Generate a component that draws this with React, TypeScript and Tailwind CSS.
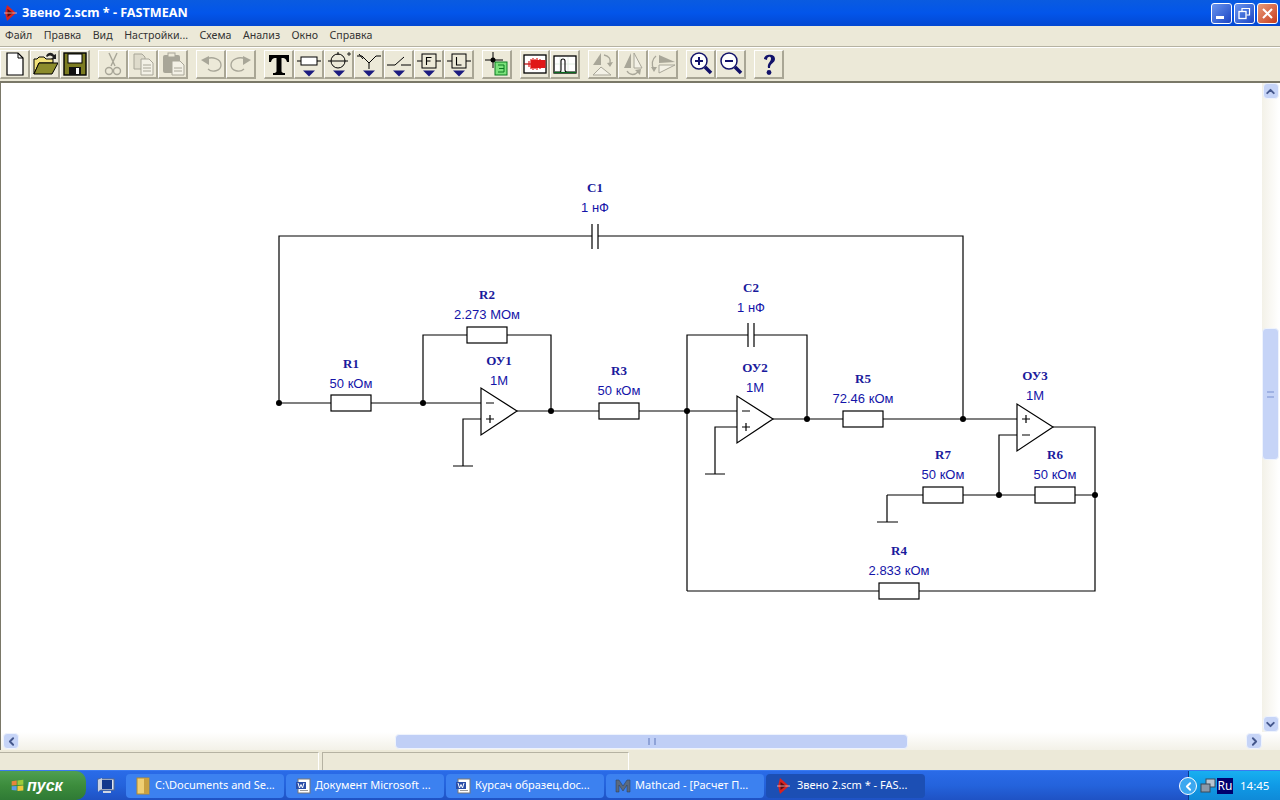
import React from 'react';
import { ChevronLeft, ChevronRight, ChevronUp, ChevronDown } from 'lucide-react';

const ui = { fontFamily: '"Noto Sans", sans-serif' };

// toolbar button with raised XP edge
const Btn = ({ children, arrow }: { children: React.ReactNode; arrow?: boolean }) => (
  <div className="relative w-[30px] h-[29px] flex items-center justify-center border-t border-l border-t-white border-l-white border-b-2 border-r-2 border-b-[#a9a695] border-r-[#a9a695] bg-[#ece9d8]">
    <svg width="26" height="26" viewBox="0 0 26 26" fill="none">
      {children}
      {arrow && <polygon points="7,19.5 19,19.5 13,25.5" fill="#1c1c80" />}
    </svg>
  </div>
);

const Group = ({ children }: { children: React.ReactNode }) => <div className="flex">{children}</div>;

const gray = '#a8a698';

const Toolbar = () => (
  <div className="h-[33px] shrink-0 flex items-center gap-2 bg-[#ece9d8]">
    <Group>
      <Btn>
        <path d="M5 2H16L21 7V24H5Z" fill="#fff" stroke="#000" strokeWidth="1.2" />
        <path d="M16 2V7H21" stroke="#000" strokeWidth="1" />
      </Btn>
      <Btn>
        <path d="M2 23V8H5L7 6H12L14 8H21V12H7L2 23Z" fill="#f2e27a" stroke="#000" />
        <path d="M2 23L7 12H26L20 23Z" fill="#8c8c2c" stroke="#000" />
        <path d="M14 5C16 1 20 1 22 4L24 3V8H19L21 6C19 4 17 4 15 6" fill="#222" />
      </Btn>
      <Btn>
        <rect x="2" y="2" width="22" height="22" fill="#7c7c22" stroke="#000" strokeWidth="1.4" />
        <rect x="6" y="3" width="14" height="9" fill="#fff" stroke="#000" />
        <rect x="7" y="16" width="12" height="8" fill="#111" />
        <rect x="14" y="17" width="3" height="6" fill="#fff" />
      </Btn>
    </Group>
    <Group>
      <Btn>
        <path d="M9 2L15 15M17 2L11 15" stroke={gray} strokeWidth="1.4" />
        <circle cx="9" cy="20" r="3.5" stroke={gray} strokeWidth="1.4" />
        <circle cx="17" cy="20" r="3.5" stroke={gray} strokeWidth="1.4" />
      </Btn>
      <Btn>
        <path d="M4 3H12L15 6V18H4Z" fill="#dedbcb" stroke={gray} />
        <path d="M11 8H19L23 12V24H11Z" fill="#f3f1e6" stroke={gray} />
        <path d="M13 14H21M13 17H21M13 20H21" stroke={gray} />
      </Btn>
      <Btn>
        <rect x="3" y="4" width="17" height="18" rx="2" fill={gray} />
        <rect x="8" y="2" width="7" height="4" fill="#ece9d8" stroke={gray} />
        <path d="M12 10H20L24 14V24H12Z" fill="#f3f1e6" stroke={gray} />
        <path d="M14 17H22M14 20H22" stroke={gray} />
      </Btn>
    </Group>
    <Group>
      <Btn>
        <path d="M9 8C14 5 23 8 23 14C23 20 14 22 10 18" stroke={gray} strokeWidth="1.3" />
        <polygon points="3,9 11,5 11,14" fill={gray} />
      </Btn>
      <Btn>
        <path d="M17 8C12 5 3 8 3 14C3 20 12 22 16 18" stroke={gray} strokeWidth="1.3" />
        <polygon points="23,9 15,5 15,14" fill={gray} />
      </Btn>
    </Group>
    <Group>
      <Btn>
        <path d="M3 4H23V11H21C20 7 18 7 15.5 7V20C15.5 21.5 16.5 22 19 22V24H7V22C9.5 22 10.5 21.5 10.5 20V7C8 7 6 7 5 11H3Z" fill="#000" />
      </Btn>
      <Btn arrow>
        <rect x="5" y="6" width="16" height="8" fill="#fff" stroke="#000" />
        <path d="M1 10H5M21 10H25" stroke="#000" />
      </Btn>
      <Btn arrow>
        <circle cx="12" cy="10" r="7" stroke="#000" />
        <path d="M2 10H22M12 1V4" stroke="#000" />
        <path d="M21 3H25M23 1V5" stroke="#000" strokeWidth="0.8" />
      </Btn>
      <Btn arrow>
        <path d="M1 5H6L13 12L20 5H25M13 12V18" stroke="#000" />
        <path d="M3 3L7 8" stroke="#000" />
      </Btn>
      <Btn arrow>
        <path d="M1 14H9L18 6M15 14H25" stroke="#000" />
      </Btn>
      <Btn arrow>
        <rect x="6" y="3" width="14" height="14" stroke="#000" fill="#ece9d8" />
        <path d="M1 10H6M20 10H25" stroke="#000" />
        <path d="M10.5 14V6.5H15.5M10.5 10H14.5" stroke="#000" strokeWidth="1.1" />
      </Btn>
      <Btn arrow>
        <rect x="6" y="3" width="14" height="14" stroke="#000" fill="#ece9d8" />
        <path d="M1 10H6M20 10H25" stroke="#000" />
        <path d="M10.5 6V14H15.5" stroke="#000" strokeWidth="1.1" />
      </Btn>
    </Group>
    <Group>
      <Btn>
        <path d="M1 9H19M9 1V17" stroke="#000" />
        <circle cx="9" cy="9" r="2.5" fill="#000" />
        <rect x="11" y="11" width="12" height="13" fill="#7be27b" stroke="#0a7a20" />
        <path d="M14 14H20V21H14M15 17.5H20" stroke="#0a7a20" />
      </Btn>
    </Group>
    <Group>
      <Btn>
        <rect x="2" y="4" width="22" height="18" fill="#fff" stroke="#000" strokeWidth="1.3" />
        <rect x="9" y="9" width="14.5" height="8" fill="#e01818" />
        <path d="M2 13H9" stroke="#a00" strokeWidth="1.2" />
        <path d="M9 8V18M11 7V19M13 8V18M15 7V19M18 8V18M7 10V16" stroke="#e01818" strokeWidth="1.2" />
      </Btn>
      <Btn>
        <rect x="2" y="5" width="22" height="17" fill="#fff" stroke="#000" strokeWidth="1.3" />
        <path d="M8 6V21M16 6V21M3 13H23" stroke="#e2efe2" />
        <path d="M3 21H8C9 21 9 20 9 19V10C9 8 10 8 11 8C12 8 13 8 13 10V19C13 20 13 21 15 21H23" stroke="#000" strokeWidth="1.1" />
        <path d="M2 21.5H24" stroke="#0a6a20" strokeWidth="1.2" />
      </Btn>
    </Group>
    <Group>
      <Btn>
        <polygon points="11,2 11,14 3,14" fill={gray} />
        <polygon points="3,24 21,24 11,16" fill="#f3f1e6" stroke={gray} />
        <path d="M14 4C19 5 21 8 20 12" stroke={gray} strokeWidth="1.3" />
        <polygon points="17,12 23,11 20,16" fill={gray} />
      </Btn>
      <Btn>
        <polygon points="11,2 11,17 4,17" fill={gray} />
        <polygon points="14,2 14,17 22,17" fill="#f3f1e6" stroke={gray} />
        <path d="M7 20C10 25 15 24 18 21" stroke={gray} strokeWidth="1.3" />
        <polygon points="15,19 21,18 20,24" fill={gray} />
      </Btn>
      <Btn>
        <polygon points="9,4 25,11 9,12" fill={gray} />
        <polygon points="9,14 25,14 9,22" fill="#f3f1e6" stroke={gray} />
        <path d="M6 5C2 8 1 14 4 18" stroke={gray} strokeWidth="1.3" />
        <polygon points="1,16 7,16 4,21" fill={gray} />
      </Btn>
    </Group>
    <Group>
      <Btn>
        <circle cx="11" cy="10" r="8" fill="#fff" stroke="#12126a" strokeWidth="1.5" />
        <path d="M7 10H15M11 6V14" stroke="#12126a" strokeWidth="2" />
        <path d="M17 16L23 22" stroke="#12126a" strokeWidth="3.5" />
      </Btn>
      <Btn>
        <circle cx="11" cy="10" r="8" fill="#fff" stroke="#12126a" strokeWidth="1.5" />
        <path d="M7 10H15" stroke="#12126a" strokeWidth="2" />
        <path d="M17 16L23 22" stroke="#12126a" strokeWidth="3.5" />
      </Btn>
    </Group>
    <Group>
      <Btn>
        <path d="M8 8C8 3 19 2 19 8C19 12 14 12 14 17H12C11 12 15 11 15 7.5C15 5 11 5 11 9Z" fill="#12126a" />
        <circle cx="13" cy="21.5" r="2.4" fill="#12126a" />
      </Btn>
    </Group>
  </div>
);

const Resistor = ({ x, y }: { x: number; y: number }) => (
  <rect x={x} y={y - 8} width="40" height="16" fill="#fff" stroke="#000" strokeWidth="1.2" />
);

const Label = ({ x, y, name, value }: { x: number; y: number; name: string; value: string }) => (
  <>
    <text x={x} y={y} textAnchor="middle" dominantBaseline="central" fill="#1a1a9c" fontSize="13" fontWeight="700" fontFamily='"Liberation Serif", serif'>{name}</text>
    <text x={x} y={y + 20} textAnchor="middle" dominantBaseline="central" fill="#1414a8" fontSize="13" fontFamily='"Liberation Sans", sans-serif'>{value}</text>
  </>
);

const nodes = [[279, 403], [423, 403], [551, 411], [687, 411], [807, 419], [963, 419], [999, 495], [1095, 495]];

const Schematic = () => (
  <svg width="1261" height="649" viewBox="1 83 1261 649" className="block" fill="none">
    <g stroke="#000" strokeWidth="1.2">
      <path d="M279 403V236H592M598 236H963V419M279 403H331M371 403H481" />
      <path d="M592 224V249M598 224V249" />
      <path d="M423 403V335H467M507 335H551V411" />
      <path d="M517 411H599M639 411H737" />
      <path d="M481 419H463V466M453 466H473" />
      <path d="M687 591V335H748M754 335H807V419M748 323V347M754 323V347" />
      <path d="M773 419H843M883 419H1017" />
      <path d="M737 427H715V474M705 474H725" />
      <path d="M1053 427H1095V591H919M879 591H687" />
      <path d="M1017 435H999V495M887 495H923M963 495H1035M1075 495H1095" />
      <path d="M887 495V522M877 522H898" />
      <path d="M481 388V435L517 411ZM737 396V443L773 419ZM1017 404V451L1053 427Z" fill="#fff" />
      <path d="M486 403H494M486 419H494M490 415V423M742 411H750M742 427H750M746 423V431M1022 419H1030M1026 415V423M1022 435H1030" />
    </g>
    <Resistor x={331} y={403} />
    <Resistor x={467} y={335} />
    <Resistor x={599} y={411} />
    <Resistor x={843} y={419} />
    <Resistor x={923} y={495} />
    <Resistor x={1035} y={495} />
    <Resistor x={879} y={591} />
    {nodes.map(([cx, cy]) => (
      <circle key={`${cx}-${cy}`} cx={cx} cy={cy} r="3" fill="#000" />
    ))}
    <Label x={595} y={187} name="C1" value="1 нФ" />
    <Label x={487} y={294} name="R2" value="2.273 МОм" />
    <Label x={351} y={363} name="R1" value="50 кОм" />
    <Label x={499} y={360} name="ОУ1" value="1М" />
    <Label x={619} y={370} name="R3" value="50 кОм" />
    <Label x={751} y={287} name="C2" value="1 нФ" />
    <Label x={755} y={367} name="ОУ2" value="1М" />
    <Label x={863} y={378} name="R5" value="72.46 кОм" />
    <Label x={1035} y={375} name="ОУ3" value="1М" />
    <Label x={943} y={454} name="R7" value="50 кОм" />
    <Label x={1055} y={454} name="R6" value="50 кОм" />
    <Label x={899} y={550} name="R4" value="2.833 кОм" />
  </svg>
);

const Logo = ({ size = 16 }: { size?: number }) => (
  <svg width={size} height={size} viewBox="0 0 16 16" className="shrink-0">
    <polygon points="3,0 12,8 3,16 1,8" fill="#d8231f" />
    <polygon points="3.5,4 9,8 3.5,12" fill="#5a0c12" />
    <path d="M0 8H13" stroke="#f0c8c8" strokeWidth="0.8" />
  </svg>
);

const ScrollBtn = ({ children }: { children: React.ReactNode }) => (
  <div className="w-[16px] h-[16px] shrink-0 flex items-center justify-center rounded-sm bg-[#c6d4f7] border border-[#eef3fd] text-[#44578c]">
    {children}
  </div>
);

const WinBtn = ({ children, red }: { children: React.ReactNode; red?: boolean }) => (
  <div className={red
    ? 'w-[21px] h-[21px] flex items-center justify-center rounded-[3px] border border-white bg-gradient-to-br from-[#e89a78] to-[#c5391a]'
    : 'w-[21px] h-[21px] flex items-center justify-center rounded-[3px] border border-white bg-gradient-to-br from-[#6a94ee] to-[#1e44c4]'}>
    {children}
  </div>
);

const TaskBtn = ({ icon, text, active }: { icon: React.ReactNode; text: string; active?: boolean }) => (
  <div className={active
    ? 'w-[159px] h-[24px] shrink-0 flex items-center gap-[4px] pl-[11px] rounded-sm bg-[#1c4fb4] text-white text-[11px] whitespace-nowrap overflow-hidden'
    : 'w-[158px] h-[24px] shrink-0 flex items-center gap-[4px] pl-[9px] rounded-sm bg-[#3c81f0] text-white text-[11px] whitespace-nowrap overflow-hidden'}>
    {icon}
    <span>{text}</span>
  </div>
);

const WordIcon = () => (
  <svg width="16" height="16" viewBox="0 0 16 16" className="shrink-0">
    <rect x="3" y="1" width="12" height="14" fill="#fff" stroke="#777" />
    <rect x="1" y="4" width="10" height="7" fill="#2a4ea8" />
    <path d="M3 5L4.5 10L6 6.5L7.5 10L9 5" stroke="#fff" fill="none" />
    <path d="M5 12.5H13" stroke="#999" />
  </svg>
);

export default function App() {
  return (
    <div className="w-[1280px] h-[800px] flex flex-col overflow-hidden bg-[#ece9d8] text-black" style={ui}>
      {/* title bar */}
      <div className="h-[26px] shrink-0 flex items-center justify-between pl-[4px] pr-[2px] bg-gradient-to-b from-[#0a5be0] via-[#0355ea] to-[#0348d2]">
        <div className="flex items-center gap-[2px]">
          <Logo />
          <span className="text-white font-bold text-[12.6px]">Звено 2.scm * - FASTMEAN</span>
        </div>
        <div className="flex items-center gap-[2px]">
          <WinBtn><div className="w-[8px] h-[3px] bg-white mt-[9px] mr-[4px]" /></WinBtn>
          <WinBtn>
            <svg width="13" height="13" viewBox="0 0 13 13" fill="none" stroke="#fff">
              <rect x="1" y="4.5" width="7" height="7" strokeWidth="1.3" />
              <path d="M4 4V1.5H11.5V8H8.5" strokeWidth="1.2" />
            </svg>
          </WinBtn>
          <WinBtn red>
            <svg width="13" height="13" viewBox="0 0 13 13" stroke="#fff" strokeWidth="2"><path d="M2 2L11 11M11 2L2 11" /></svg>
          </WinBtn>
        </div>
      </div>

      {/* menu */}
      <div className="h-[20px] shrink-0 flex items-center gap-[11.5px] pl-[5px] text-[10.6px] text-[#333]">
        <span>Файл</span>
        <span>Правка</span>
        <span>Вид</span>
        <span>Настройки...</span>
        <span>Схема</span>
        <span>Анализ</span>
        <span>Окно</span>
        <span>Справка</span>
      </div>
      <div className="h-[2px] shrink-0 bg-white border-t border-[#b5b2a2]" />

      <Toolbar />

      {/* canvas + vertical scrollbar */}
      <div className="h-[651px] shrink-0 flex border-t-2 border-l border-[#7a7868] bg-white">
        <div className="w-[1261px] h-[649px] overflow-hidden bg-white">
          <Schematic />
        </div>
        <div className="w-[17px] flex flex-col items-center justify-between bg-gradient-to-r from-[#f3f1e8] to-white">
          <ScrollBtn><ChevronUp size={13} strokeWidth={3.5} /></ScrollBtn>
          <div className="flex-1 pt-[229px] w-full">
            <div className="h-[132px] flex items-center justify-center rounded-sm bg-[#c6d4f7] border border-[#eef3fd]">
              <div className="w-[7px] h-[7px] border-y-2 border-double border-[#9fb2e4]" />
            </div>
          </div>
          <ScrollBtn><ChevronDown size={13} strokeWidth={3.5} /></ScrollBtn>
        </div>
      </div>

      {/* horizontal scrollbar */}
      <div className="h-[18px] shrink-0 flex items-center pl-[2px] pr-[18px] border-l border-[#7a7868] bg-gradient-to-b from-white to-[#f3f1e8]">
        <ScrollBtn><ChevronLeft size={13} strokeWidth={3.5} /></ScrollBtn>
        <div className="w-[376px] shrink-0" />
        <div className="w-[513px] h-[15px] shrink-0 flex items-center justify-center rounded-sm bg-[#c0cff6] border border-[#eef3fd]">
          <div className="w-[8px] h-[7px] border-x-2 border-double border-[#8fa3d8]" />
        </div>
        <div className="flex-1" />
        <ScrollBtn><ChevronRight size={13} strokeWidth={3.5} /></ScrollBtn>
      </div>

      {/* status bar */}
      <div className="h-[20px] shrink-0 flex gap-[3px] pt-[2px] bg-[#ece9d8]">
        <div className="w-[319px] border-t border-r border-t-[#b5b2a2] border-r-white" />
        <div className="w-[307px] border-t border-l border-r border-t-[#b5b2a2] border-l-[#b5b2a2] border-r-white" />
      </div>

      {/* taskbar */}
      <div className="flex-1 flex items-center bg-gradient-to-b from-[#2a6be8] via-[#2463dc] to-[#1f52c4] border-t border-[#3a7af0]">
        <div className="w-[86px] h-full shrink-0 flex items-center gap-[2px] pl-[10px] rounded-r-[10px] bg-gradient-to-b from-[#4f9f52] via-[#3c8c3c] to-[#2f7a35]">
          <svg width="15" height="15" viewBox="0 0 18 18" className="shrink-0">
            <path d="M2 4L8 3V8.5L2 9Z" fill="#e8843c" />
            <path d="M9 3L16 2V8L9 8.5Z" fill="#9ccc3c" />
            <path d="M2 10L8 9.5V15L2 14.5Z" fill="#5a9ce8" />
            <path d="M9 9.5L16 9V15L9 15.5Z" fill="#f0c83c" />
          </svg>
          <span className="text-white text-[16px] font-bold italic" style={{ fontFamily: '"Liberation Sans", sans-serif' }}>пуск</span>
        </div>
        <div className="w-[40px] shrink-0 flex justify-center">
          <svg width="18" height="18" viewBox="0 0 18 18">
            <rect x="1" y="2" width="16" height="11" fill="#dfe6f2" stroke="#5b6a86" />
            <rect x="5" y="3" width="10" height="9" fill="#12388c" />
            <path d="M1 3L5 1V11L1 15Z" fill="#c9d2e2" />
            <rect x="6" y="14" width="8" height="2" fill="#cfd6e4" />
          </svg>
        </div>
        <div className="flex gap-[2px]">
          <TaskBtn
            icon={
              <svg width="16" height="18" viewBox="0 0 16 18" className="shrink-0">
                <rect x="2" y="1" width="12" height="16" fill="#f0cf73" stroke="#b08a30" />
                <rect x="9" y="1" width="5" height="16" fill="#c9a040" />
              </svg>
            }
            text="C:\Documents and Se..."
          />
          <TaskBtn icon={<WordIcon />} text="Документ Microsoft ..." />
          <TaskBtn icon={<WordIcon />} text="Курсач образец.doc..." />
          <TaskBtn
            icon={
              <svg width="16" height="16" viewBox="0 0 16 16" className="shrink-0">
                <path d="M1 14V2H4L8 8L12 2H15V14H12V7L8 13L4 7V14Z" fill="#5a6a80" stroke="#2a3a50" strokeWidth="0.5" />
              </svg>
            }
            text="Mathcad - [Расчет П..."
          />
          <TaskBtn active icon={<Logo />} text="Звено 2.scm * - FAS..." />
        </div>
        <div className="flex-1" />
        <div className="relative w-[92px] h-full shrink-0 flex items-center pl-[10px] bg-gradient-to-b from-[#18b0f0] via-[#109ae6] to-[#0f8ad8] border-l border-[#0a3a90]">
          <div className="absolute left-[-10px] top-[6px] w-[18px] h-[18px] rounded-full flex items-center justify-center bg-[#3ca8f0] border border-white text-white">
            <ChevronLeft size={13} strokeWidth={3.5} />
          </div>
          <svg width="18" height="18" viewBox="0 0 18 18" className="shrink-0">
            <rect x="7" y="2" width="9" height="8" fill="#b8c4d0" stroke="#3a4a5a" />
            <rect x="2" y="7" width="9" height="8" fill="#8a98a8" stroke="#3a4a5a" />
          </svg>
          <div className="w-[16px] h-[16px] shrink-0 flex items-center justify-center bg-[#00006e] text-white text-[12px]">Ru</div>
          <span className="ml-[7px] text-white text-[11.5px]">14:45</span>
        </div>
      </div>
    </div>
  );
}
